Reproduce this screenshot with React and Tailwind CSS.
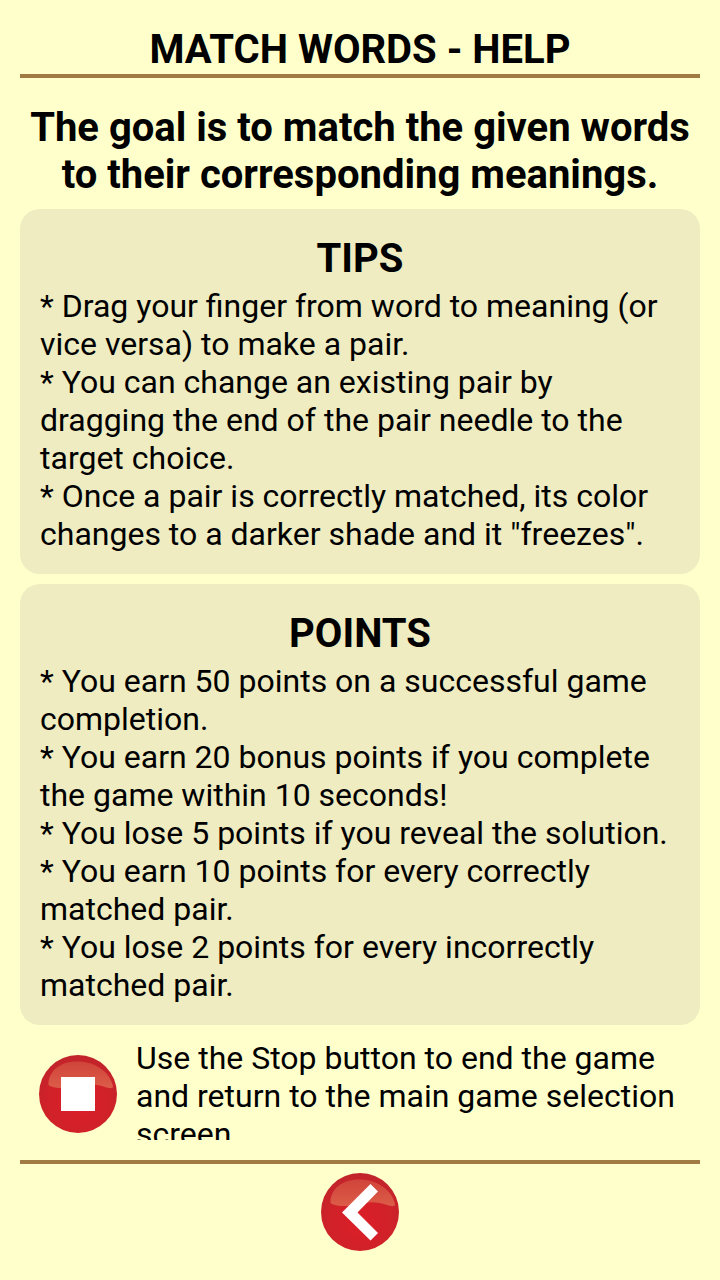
import React from "react";

const tips = [
  "Drag your finger from word to meaning (or vice versa) to make a pair.",
  "You can change an existing pair by dragging the end of the pair needle to the target choice.",
  'Once a pair is correctly matched, its color changes to a darker shade and it "freezes".',
];

const points = [
  "You earn 50 points on a successful game completion.",
  "You earn 20 bonus points if you complete the game within 10 seconds!",
  "You lose 5 points if you reveal the solution.",
  "You earn 10 points for every correctly matched pair.",
  "You lose 2 points for every incorrectly matched pair.",
];

const GlossyCircle = ({ id, children }) => (
  <svg viewBox="0 0 78 78" className="block size-[78px]" aria-hidden="true">
    <defs>
      <radialGradient id={`${id}-base`} cx="50%" cy="62%" r="62%">
        <stop offset="0" stopColor="#dc1f28" />
        <stop offset="0.65" stopColor="#d02129" />
        <stop offset="1" stopColor="#c0242b" />
      </radialGradient>
      <linearGradient id={`${id}-shine`} x1="0" y1="0" x2="0" y2="1">
        <stop offset="0" stopColor="#d0443a" />
        <stop offset="1" stopColor="#dc5c48" />
      </linearGradient>
    </defs>
    <circle cx="39" cy="39" r="39" fill={`url(#${id}-base)`} />
    <path
      d="M9.5 28C10.500 15 22 6.500 38 6.500C56 6.500 71 17 74 31C74.500 34 70 33.500 66 32C54 27.500 44 29 34 32C26 34 15 33 11 31C9.500 30.500 9.300 29.500 9.500 28Z"
      fill={`url(#${id}-shine)`}
    />
    {children}
  </svg>
);

const HelpCard = ({ title, items }) => (
  <section className="rounded-[20px] bg-[#eeecc0] px-5 pt-[26px] pb-[21px]">
    <h2 className="mb-[5px] text-center text-[40px] leading-[47px] font-bold">{title}</h2>
    <ul className="text-[32px] leading-[38px]">
      {items.map((item) => (
        <li key={item}>{`* ${item}`}</li>
      ))}
    </ul>
  </section>
);

const App = () => {
  return (
    <div className="flex h-screen flex-col bg-[#ffffcc] px-5 font-[Roboto,sans-serif] text-black">
      <header className="border-b-4 border-[#a07c44] pt-[26px]">
        <h1 className="text-center text-[40px] leading-[48px] font-bold">MATCH WORDS - HELP</h1>
      </header>

      <main className="mb-5 min-h-0 flex-1 overflow-y-auto pt-[26px] [scrollbar-width:none]">
        <p className="mb-[11px] text-center text-[40px] leading-[47px] font-bold">
          The goal is to match the given words to their corresponding meanings.
        </p>

        <div className="flex flex-col gap-[10px]">
          <HelpCard title="TIPS" items={tips} />
          <HelpCard title="POINTS" items={points} />
        </div>

        <div className="mt-[14px] flex items-start gap-[19px] pl-[19px]">
          <div className="shrink-0 pt-4">
            <GlossyCircle id="stop">
              <rect x="22" y="22" width="34" height="34" fill="#fff" />
            </GlossyCircle>
          </div>
          <p className="text-[32px] leading-[38px]">
            Use the Stop button to end the game and return to the main game selection screen.
          </p>
        </div>
      </main>

      <footer className="flex justify-center border-t-4 border-[#a07c44] pt-[9px] pb-[29px]">
        <button type="button" aria-label="Back" className="rounded-full">
          <GlossyCircle id="back">
            <path d="M49.500 11L21 39.500L49.500 67.500L57 60L36.500 39.500L57 18.500Z" fill="#fff" />
          </GlossyCircle>
        </button>
      </footer>
    </div>
  );
};

export default App;
